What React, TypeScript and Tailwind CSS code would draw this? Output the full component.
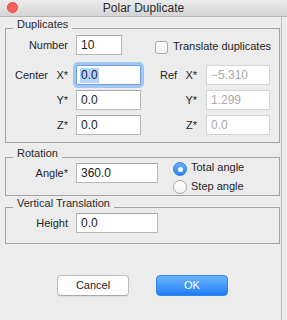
import React from "react";

function Field({
  w,
  value,
  focused,
  disabled,
}: {
  w: string;
  value: string;
  focused?: boolean;
  disabled?: boolean;
}) {
  if (focused) {
    return (
      <div
        className={`${w} h-[20px] bg-white border border-[#6f9fe0] rounded-[2px] shadow-[0_0_0_3px_#a3c5f2] flex items-center pl-[3px] text-[12px] text-[#1a1a1a]`}
      >
        <span className="bg-[#b3d4fc] px-[1px] leading-[15px]">{value}</span>
      </div>
    );
  }
  return (
    <div
      className={`${w} h-[20px] bg-white border ${
        disabled
          ? "border-[#d4d4d4] text-[#a8a8a8]"
          : "border-[#b8b8b8] border-t-[#a5a5a5] text-[#1a1a1a]"
      } flex items-center pl-[4px] text-[12px]`}
    >
      {value}
    </div>
  );
}

function Group({
  title,
  className,
  children,
}: {
  title: string;
  className: string;
  children: React.ReactNode;
}) {
  return (
    <div className={`relative border border-[#a3a3a3] ${className}`}>
      <span className="absolute left-[7px] -top-[12px] px-[4px] leading-[14px] bg-[#ececec] text-[#2a2a2a]">
        {title}
      </span>
      {children}
    </div>
  );
}

export default function App() {
  return (
    <div className="w-[287px] h-[320px] bg-[#ececec] overflow-hidden font-['Liberation_Sans',Arial,sans-serif] text-[11px] text-[#1e1e1e]">
      <div className="h-[17px] border-b border-[#b5b5b5] bg-gradient-to-b from-[#ececec] to-[#d4d4d4] grid grid-cols-[1fr_auto_1fr] items-center">
        <div className="pl-[7px] flex items-center">
          <div className="w-[11px] h-[11px] rounded-full bg-[#fc5f57] border border-[#df4a43] -mt-[1px]" />
        </div>
        <div className="text-[12px] leading-[16px] text-[#2b2b2b]">Polar Duplicate</div>
        <div />
      </div>

      <div className="w-[282px] h-[303px] border-r border-[#bdbdbd] pl-[5px] pr-[1px] flex flex-col">
        <Group title="Duplicates" className="mt-[11px] pt-[6px] pb-[7px]">
          <div className="flex items-start">
            <div className="w-[62px] h-[20px] leading-[20px] text-right">Number</div>
            <div className="ml-[8px]">
              <Field w="w-[46px]" value="10" />
            </div>
            <div className="ml-[33px] mt-[6px] w-[13px] h-[13px] rounded-[3px] border border-[#a9a9a9] bg-gradient-to-b from-white to-[#f4f4f4]" />
            <div className="ml-[5px] mt-[5px] leading-[13px]">Translate duplicates</div>
          </div>

          <div className="flex items-center mt-[10px] h-[20px]">
            <div className="w-[62px] pl-[9px] flex justify-between">
              <span>Center</span>
              <span>X*</span>
            </div>
            <div className="ml-[8px]">
              <Field w="w-[65px]" value="0.0" focused />
            </div>
            <div className="ml-[19px] w-[37px] flex justify-between">
              <span>Ref</span>
              <span>X*</span>
            </div>
            <div className="ml-[9px]">
              <Field w="w-[64px]" value="−5.310" disabled />
            </div>
          </div>

          <div className="flex items-center mt-[5px] h-[20px]">
            <div className="w-[62px] text-right">Y*</div>
            <div className="ml-[8px]">
              <Field w="w-[65px]" value="0.0" />
            </div>
            <div className="ml-[19px] w-[37px] text-right">Y*</div>
            <div className="ml-[9px]">
              <Field w="w-[64px]" value="1.299" disabled />
            </div>
          </div>

          <div className="flex items-center mt-[5px] h-[20px]">
            <div className="w-[62px] text-right">Z*</div>
            <div className="ml-[8px]">
              <Field w="w-[65px]" value="0.0" />
            </div>
            <div className="ml-[19px] w-[37px] text-right">Z*</div>
            <div className="ml-[9px]">
              <Field w="w-[64px]" value="0.0" disabled />
            </div>
          </div>
        </Group>

        <Group title="Rotation" className="mt-[14px] pt-[2px]">
          <div className="flex items-start">
            <div className="flex items-center mt-[3px]">
              <div className="w-[62px] text-right">Angle*</div>
              <div className="ml-[8px]">
                <Field w="w-[82px]" value="360.0" />
              </div>
            </div>
            <div className="ml-[15px] flex flex-col">
              <div className="h-[18px] flex items-center">
                <div className="w-[14px] h-[14px] rounded-full bg-gradient-to-b from-[#63b0fb] to-[#2a86f3] border border-[#2f7fe0] flex items-center justify-center">
                  <div className="w-[5px] h-[5px] rounded-full bg-white" />
                </div>
                <span className="ml-[4px] mb-[4px]">Total angle</span>
              </div>
              <div className="h-[17px] flex items-center">
                <div className="w-[14px] h-[14px] rounded-full bg-gradient-to-b from-white to-[#f3f3f3] border border-[#a9a9a9]" />
                <span className="ml-[4px]">Step angle</span>
              </div>
            </div>
          </div>
        </Group>

        <Group title="Vertical Translation" className="mt-[11px] pt-[5px] pb-[10px]">
          <div className="flex items-center">
            <div className="w-[62px] text-right">Height</div>
            <div className="ml-[8px]">
              <Field w="w-[82px]" value="0.0" />
            </div>
          </div>
        </Group>

        <div className="mt-[31px] flex pl-[52px] gap-[27px]">
          <div className="w-[72px] h-[21px] rounded-[4px] bg-white border border-[#bdbdbd] border-b-[#a8a8a8] shadow-[0_1px_0_rgba(0,0,0,0.05)] flex items-center justify-center text-[11px] text-[#1e1e1e]">
            Cancel
          </div>
          <div className="w-[72px] h-[21px] rounded-[4px] bg-gradient-to-b from-[#69b2fb] to-[#1b7ef8] border border-[#2f86ee] flex items-center justify-center text-[11px] text-white">
            OK
          </div>
        </div>
      </div>
    </div>
  );
}
